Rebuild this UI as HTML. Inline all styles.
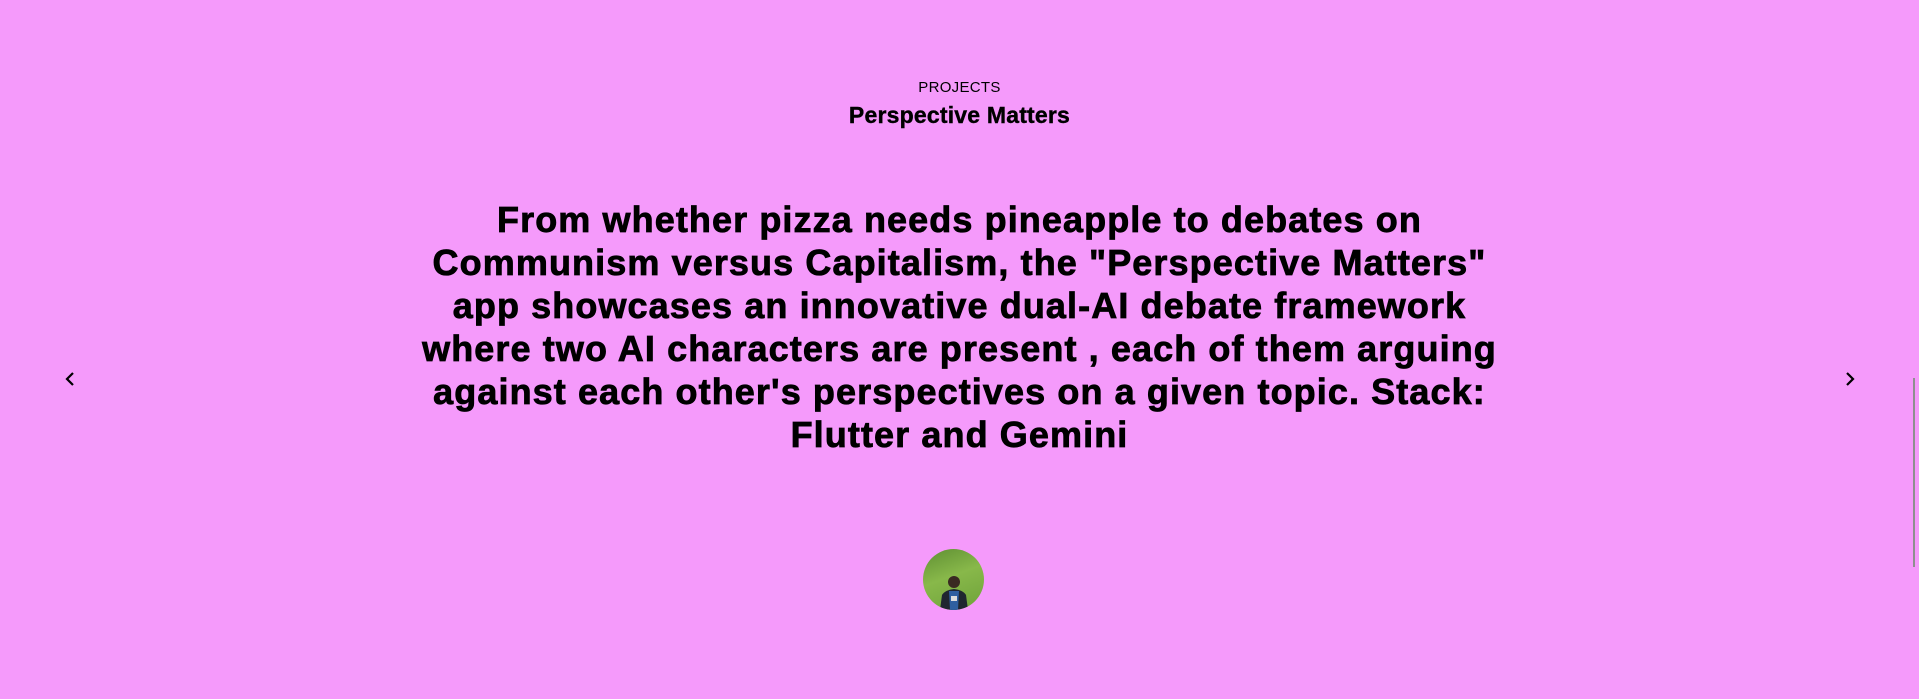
<!DOCTYPE html>
<html><head><meta charset="utf-8"><style>
html,body{margin:0;padding:0;width:1919px;height:699px;overflow:hidden;background:#f59afb;font-family:"Liberation Sans",sans-serif;color:#000;}
.k{position:absolute;left:0;width:1919px;text-align:center;}
.p{top:79px;font-size:15px;line-height:18px;letter-spacing:0.3px;}
.t{top:102px;font-size:23px;line-height:26px;font-weight:bold;letter-spacing:0.2px;-webkit-text-stroke:0.4px #000;}
.m{top:198px;font-size:36px;line-height:43px;font-weight:bold;white-space:nowrap;letter-spacing:1.1px;-webkit-text-stroke:0.8px #000;}
.av{position:absolute;left:923px;top:549px;width:61px;height:61px;border-radius:50%;overflow:hidden;background:linear-gradient(160deg,#5f8f33,#88b84a 45%,#6ea23a);}
.sb{position:absolute;left:1913px;top:378px;width:2px;height:189px;background:#8f8f8f;}
</style></head><body>
<div class="k p">PROJECTS</div>
<div class="k t">Perspective Matters</div>
<div class="k m">From whether pizza needs pineapple to debates on<br>Communism versus Capitalism, the "Perspective Matters"<br>app showcases an innovative dual-AI debate framework<br>where two AI characters are present , each of them arguing<br>against each other's perspectives on a given topic. Stack:<br>Flutter and Gemini</div>
<div class="av"><svg width="61" height="61" viewBox="0 0 61 61"><circle cx="31" cy="33" r="6" fill="#3a2a22"/><path d="M17 61 L19 46 Q22 41 31 40 Q40 41 43 46 L45 61Z" fill="#1f2630"/><path d="M26 42 L36 42 L35 61 L27 61Z" fill="#2f5fa0"/><rect x="28" y="47" width="6" height="5" fill="#ddd"/></svg></div>
<svg style="position:absolute;left:63px;top:371px" width="14" height="16" viewBox="0 0 14 16"><path d="M10 2 L4 8 L10 14" fill="none" stroke="#000" stroke-width="2.2"/></svg>
<svg style="position:absolute;left:1843px;top:371px" width="14" height="16" viewBox="0 0 14 16"><path d="M4 2 L10 8 L4 14" fill="none" stroke="#000" stroke-width="2.2"/></svg>
<div class="sb"></div>
</body></html>
